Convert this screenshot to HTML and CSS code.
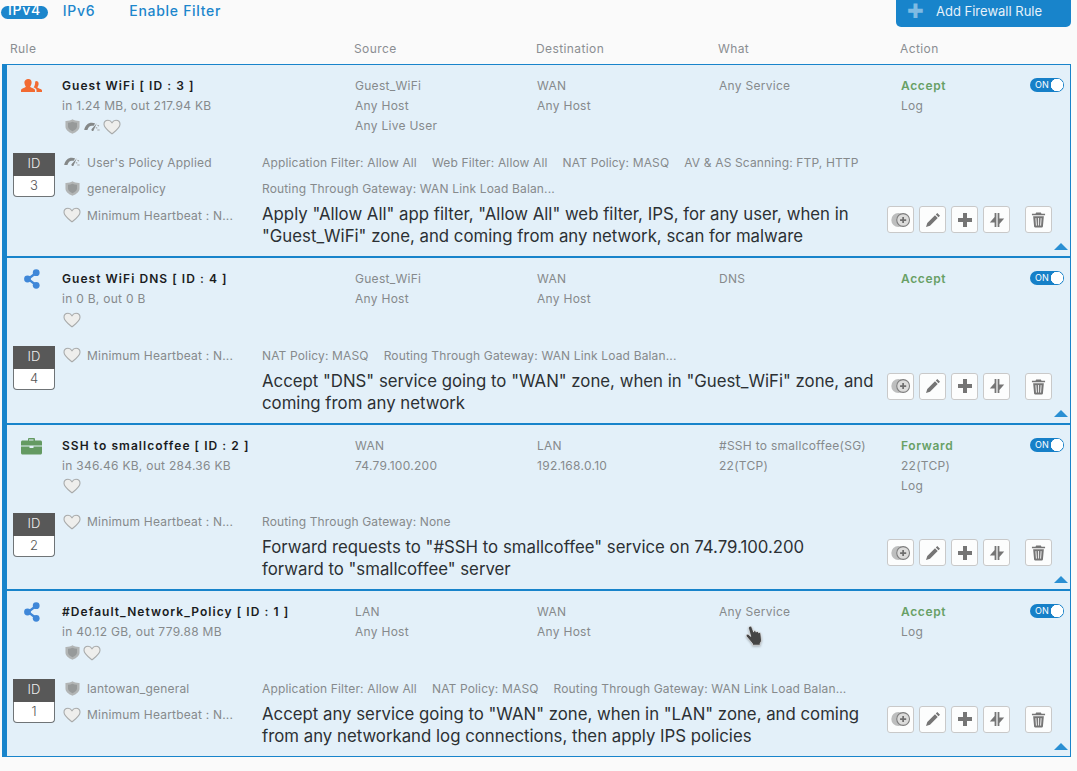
FILE: index.html
```html
<!DOCTYPE html>
<html lang="en">
<head>
<meta charset="utf-8">
<title>Firewall Rules</title>
<link rel="stylesheet" href="styles.css">
</head>
<body>
<svg class="defs" width="0" height="0" aria-hidden="true">
  <symbol id="shield" viewBox="0 0 16 16"><path d="M8 .3C10 1.600 12.500 2.100 15.500 2V8c0 3.500-3.200 6-7.500 7.700C3.700 14 .5 11.500.5 8V2C3.500 2.100 6 1.600 8 .3Z" fill="#b2b5b5"/><path d="M8 3c1.300.7 3 1.100 4.800 1.100v4c0 2.200-2.200 3.900-4.800 5-2.600-1.100-4.800-2.800-4.800-5v-4C5 4.100 6.700 3.700 8 3Z" fill="#979a9a"/></symbol>
  <symbol id="gauge" viewBox="0 0 16 10"><path d="M.2 8C1 3.500 4 .8 7.800.8c1.300 0 2.400.3 3.400.8L9.400 3.900C9 3.800 8.500 3.800 8 3.800 5.800 3.800 4.200 5.300 3.400 8Z" fill="#858888"/><path d="M12.800 1.200 7.500 7.300a1.300 1.300 0 0 0 1.800 1.600Z" fill="#858888"/><path d="M11.800 5.500l1.500.7M13.500 3.300l1.500.8M13.300 8h2.400" stroke="#a5a8a8" stroke-width="1.100"/></symbol>
  <symbol id="heart" viewBox="0 0 18 16"><path d="M9 14.800C5 11.700 1 9 1 5.300 1 2.900 2.800 1.200 5 1.200c1.700 0 3.100 1 4 2.500.9-1.500 2.300-2.500 4-2.500 2.200 0 4 1.700 4 4.100 0 3.700-4 6.400-8 9.500Z" fill="#eeeeec" stroke="#a8aaaa" stroke-width="1.100"/></symbol>
  <symbol id="people" viewBox="0 0 21 15"><path d="M7.500 1C9.500 1 10.800 2.600 10.600 4.700 10.500 6.300 9.900 7.500 9.300 8.300c-.3.800.3 1 1.500 1.500 1.400.6 3 1.100 3.200 2.400V14H0v-1.800c.2-1.300 1.800-1.800 3.200-2.400 1.200-.5 1.800-.7 1.500-1.500C4.100 7.500 3.500 6.300 3.400 4.700 3.200 2.600 5.500 1 7.500 1Z" fill="#f26a32"/><path d="M15 3c1.700 0 2.800 1.300 2.600 3.100-.1 1.300-.6 2.300-1.100 2.900-.2.700.2.900 1.200 1.300 1.200.5 2.800 1 3.300 2V14h-5.500v-2.300c-.3-1.300-1.800-2-2.900-2.500l.5-.5c.4-.8.900-1.900 1-3.200C14.100 4 14.300 3 15 3Z" fill="#f26a32"/></symbol>
  <symbol id="share" viewBox="0 0 16 20"><path d="M12 4 4 10l8 6" fill="none" stroke="#3f87d8" stroke-width="2.200"/><circle cx="12.200" cy="3.700" r="3.400" fill="#3f87d8"/><circle cx="3.500" cy="10" r="3.400" fill="#3f87d8"/><circle cx="12.200" cy="16.300" r="3.400" fill="#3f87d8"/></symbol>
  <symbol id="case" viewBox="0 0 21 18"><path d="M7 4V2.200C7 1.500 7.500 1 8.200 1h4.600c.7 0 1.200.5 1.200 1.200V4h-1.500V2.500h-4.500V4Z" fill="#649a62"/><path d="M1.500 3.500h18c.8 0 1.500.7 1.500 1.500v3.500H0V5c0-.8.700-1.500 1.500-1.500Z" fill="#649a62"/><path d="M0 9.500h8.500v1.500h4V9.500H21v6.500c0 .8-.7 1.500-1.500 1.500h-18C.7 17.500 0 16.800 0 16Z" fill="#649a62"/></symbol>
  <symbol id="b-add" viewBox="0 0 24 18"><circle cx="9.500" cy="9" r="8" fill="#bdbebe"/><circle cx="15" cy="9" r="7.300" fill="#dcdcdb" stroke="#7d7d7d" stroke-width="1.200"/><path d="M15 5.500v7M11.500 9h7" stroke="#6f6f6f" stroke-width="2"/></symbol>
  <symbol id="b-pen" viewBox="0 0 16 16"><path d="M12.300 1 15 3.700 13.500 5.200 10.800 2.500ZM10 3.300 12.700 6 5 13.700 1 15 2.300 11Z" fill="#757575"/></symbol>
  <symbol id="b-plus" viewBox="0 0 16 16"><path d="M6 1h4v5h5v4h-5v5H6v-5H1V6h5Z" fill="#757575"/></symbol>
  <symbol id="b-merge" viewBox="0 0 16 16"><path d="M7.400 1v14H5.600v-4.500H.8L5.600 5V1ZM8.600 15V1h1.800v5.500h4.800L10.400 12v3Z" fill="#757575"/></symbol>
  <symbol id="b-trash" viewBox="0 0 16 18"><path d="M5.500 1.500h5l.7 1.300H15v1.700H1V2.800h3.800Z" fill="#757575"/><path d="M2.300 5.500h11.400l-1 11c0 .5-.5 1-1 1H4.300c-.5 0-1-.5-1-1Z" fill="#757575"/><path d="M5.200 7.500l.6 8M8 7.500v8M10.800 7.500l-.6 8" stroke="#e8e8e8" stroke-width="1.100"/></symbol>
</svg>

<header class="topbar">
  <nav class="tabs">
    <a class="tab tab-active">IPv4</a>
    <a class="tab">IPv6</a>
    <a class="tab">Enable Filter</a>
  </nav>
  <button class="add-btn"><span class="add-plus">✚</span><span>Add Firewall Rule</span></button>
</header>

<div class="cols">
  <div>Rule</div><div>Source</div><div>Destination</div><div>What</div><div>Action</div>
</div>

<section class="rule">
  <div class="top">
    <div class="type"><svg class="ic-people"><use href="#people"/></svg></div>
    <div><div class="name">Guest WiFi [ ID : 3 ]</div><div class="line">in 1.24 MB, out 217.94 KB</div>
      <div class="badges"><svg class="i-shield"><use href="#shield"/></svg><svg class="i-gauge"><use href="#gauge"/></svg><svg class="i-heart"><use href="#heart"/></svg></div></div>
    <div><div class="line">Guest_WiFi</div><div class="line">Any Host</div><div class="line">Any Live User</div></div>
    <div><div class="line">WAN</div><div class="line">Any Host</div></div>
    <div><div class="line">Any Service</div></div>
    <div class="action"><div><div class="line verb">Accept</div><div class="line">Log</div></div><div class="toggle">ON</div></div>
  </div>
  <div class="bottom">
    <div class="idbox"><div class="idh">ID</div><div class="idn">3</div></div>
    <div class="meta">
      <div class="mrow"><span class="mi"><svg class="i-gauge"><use href="#gauge"/></svg></span>User's Policy Applied</div>
      <div class="mrow"><span class="mi"><svg class="i-shield"><use href="#shield"/></svg></span>generalpolicy</div>
      <div class="mrow"><span class="mi"><svg class="i-heart"><use href="#heart"/></svg></span>Minimum Heartbeat : N...</div>
    </div>
    <div class="detail">
      <div class="drow"><span>Application Filter: Allow All</span><span>Web Filter: Allow All</span><span>NAT Policy: MASQ</span><span>AV &amp; AS Scanning: FTP, HTTP</span></div>
      <div class="drow"><span>Routing Through Gateway: WAN Link Load Balan...</span></div>
      <div class="sumrow"><p class="summary">Apply "Allow All" app filter, "Allow All" web filter, IPS, for any user, when in "Guest_WiFi" zone, and coming from any network, scan for malware</p>
        <div class="btns"><button class="btn"><svg class="b-add"><use href="#b-add"/></svg></button><button class="btn"><svg class="b"><use href="#b-pen"/></svg></button><button class="btn"><svg class="b"><use href="#b-plus"/></svg></button><button class="btn"><svg class="b"><use href="#b-merge"/></svg></button><button class="btn btn-del"><svg class="b-t"><use href="#b-trash"/></svg></button></div></div>
    </div>
  </div>
  <span class="caret"></span>
</section>

<section class="rule">
  <div class="top">
    <div class="type"><svg class="ic-share"><use href="#share"/></svg></div>
    <div><div class="name">Guest WiFi DNS [ ID : 4 ]</div><div class="line">in 0 B, out 0 B</div>
      <div class="badges"><svg class="i-heart"><use href="#heart"/></svg></div></div>
    <div><div class="line">Guest_WiFi</div><div class="line">Any Host</div></div>
    <div><div class="line">WAN</div><div class="line">Any Host</div></div>
    <div><div class="line">DNS</div></div>
    <div class="action"><div><div class="line verb">Accept</div></div><div class="toggle">ON</div></div>
  </div>
  <div class="bottom">
    <div class="idbox"><div class="idh">ID</div><div class="idn">4</div></div>
    <div class="meta">
      <div class="mrow"><span class="mi"><svg class="i-heart"><use href="#heart"/></svg></span>Minimum Heartbeat : N...</div>
    </div>
    <div class="detail">
      <div class="drow"><span>NAT Policy: MASQ</span><span>Routing Through Gateway: WAN Link Load Balan...</span></div>
      <div class="sumrow"><p class="summary">Accept "DNS" service going to "WAN" zone, when in "Guest_WiFi" zone, and coming from any network</p>
        <div class="btns"><button class="btn"><svg class="b-add"><use href="#b-add"/></svg></button><button class="btn"><svg class="b"><use href="#b-pen"/></svg></button><button class="btn"><svg class="b"><use href="#b-plus"/></svg></button><button class="btn"><svg class="b"><use href="#b-merge"/></svg></button><button class="btn btn-del"><svg class="b-t"><use href="#b-trash"/></svg></button></div></div>
    </div>
  </div>
  <span class="caret"></span>
</section>

<section class="rule">
  <div class="top">
    <div class="type"><svg class="ic-case"><use href="#case"/></svg></div>
    <div><div class="name">SSH to smallcoffee [ ID : 2 ]</div><div class="line">in 346.46 KB, out 284.36 KB</div>
      <div class="badges"><svg class="i-heart"><use href="#heart"/></svg></div></div>
    <div><div class="line">WAN</div><div class="line">74.79.100.200</div></div>
    <div><div class="line">LAN</div><div class="line">192.168.0.10</div></div>
    <div><div class="line">#SSH to smallcoffee(SG)</div><div class="line">22(TCP)</div></div>
    <div class="action"><div><div class="line verb">Forward</div><div class="line">22(TCP)</div><div class="line">Log</div></div><div class="toggle">ON</div></div>
  </div>
  <div class="bottom">
    <div class="idbox"><div class="idh">ID</div><div class="idn">2</div></div>
    <div class="meta">
      <div class="mrow"><span class="mi"><svg class="i-heart"><use href="#heart"/></svg></span>Minimum Heartbeat : N...</div>
    </div>
    <div class="detail">
      <div class="drow"><span>Routing Through Gateway: None</span></div>
      <div class="sumrow"><p class="summary">Forward requests to "#SSH to smallcoffee" service on 74.79.100.200<br>forward to "smallcoffee" server</p>
        <div class="btns"><button class="btn"><svg class="b-add"><use href="#b-add"/></svg></button><button class="btn"><svg class="b"><use href="#b-pen"/></svg></button><button class="btn"><svg class="b"><use href="#b-plus"/></svg></button><button class="btn"><svg class="b"><use href="#b-merge"/></svg></button><button class="btn btn-del"><svg class="b-t"><use href="#b-trash"/></svg></button></div></div>
    </div>
  </div>
  <span class="caret"></span>
</section>

<section class="rule">
  <div class="top">
    <div class="type"><svg class="ic-share"><use href="#share"/></svg></div>
    <div><div class="name">#Default_Network_Policy [ ID : 1 ]</div><div class="line">in 40.12 GB, out 779.88 MB</div>
      <div class="badges"><svg class="i-shield"><use href="#shield"/></svg><svg class="i-heart"><use href="#heart"/></svg></div></div>
    <div><div class="line">LAN</div><div class="line">Any Host</div></div>
    <div><div class="line">WAN</div><div class="line">Any Host</div></div>
    <div><div class="line">Any Service</div></div>
    <div class="action"><div><div class="line verb">Accept</div><div class="line">Log</div></div><div class="toggle">ON</div></div>
  </div>
  <div class="bottom">
    <div class="idbox"><div class="idh">ID</div><div class="idn">1</div></div>
    <div class="meta">
      <div class="mrow"><span class="mi"><svg class="i-shield"><use href="#shield"/></svg></span>lantowan_general</div>
      <div class="mrow"><span class="mi"><svg class="i-heart"><use href="#heart"/></svg></span>Minimum Heartbeat : N...</div>
    </div>
    <div class="detail">
      <div class="drow"><span>Application Filter: Allow All</span><span>NAT Policy: MASQ</span><span>Routing Through Gateway: WAN Link Load Balan...</span></div>
      <div class="sumrow"><p class="summary">Accept any service going to "WAN" zone, when in "LAN" zone, and coming from any networkand log connections, then apply IPS policies</p>
        <div class="btns"><button class="btn"><svg class="b-add"><use href="#b-add"/></svg></button><button class="btn"><svg class="b"><use href="#b-pen"/></svg></button><button class="btn"><svg class="b"><use href="#b-plus"/></svg></button><button class="btn"><svg class="b"><use href="#b-merge"/></svg></button><button class="btn btn-del"><svg class="b-t"><use href="#b-trash"/></svg></button></div></div>
    </div>
  </div>
  <span class="caret"></span>
</section>

<svg class="cursor" viewBox="0 0 20 22" aria-hidden="true"><path d="M4.500 1.500c.8-.7 1.800-.3 2.200.6l2 5 .2-1.300c.6-.5 1.500-.3 1.800.4l.4 1 .4-.6c.6-.4 1.500-.2 1.800.5l.3.8.5-.3c.7-.2 1.400.2 1.600 1l.8 6.400c0 1.300-.5 2.400-1.300 3.200v2H7.500v-1.500L1.500 11.500c-.5-.7-.4-1.600.3-2 .6-.4 1.400-.3 2 .2l2 1.800-2.200-8c-.2-.7.200-1.600.9-2Z" fill="#454545" stroke="#fff" stroke-width=".6"/></svg>
</body>
</html>
```
FILE: styles.css
```css
* { box-sizing: border-box; }
html, body { margin: 0; padding: 0; }
body {
  width: 1077px;
  height: 771px;
  overflow: hidden;
  position: relative;
  background: #fafafa;
  font-family: Inter, "Noto Sans", sans-serif;
  font-size: 12px;
  color: #868a8c;
}
.defs { position: absolute; }
svg { display: block; }

.topbar { display: flex; justify-content: space-between; height: 27px; padding: 0 6px 0 1px; }
.tabs { display: flex; align-items: flex-start; }
.tab {
  height: 20px;
  line-height: 21px;
  font-size: 14px;
  font-weight: 500;
  letter-spacing: .7px;
  color: #1c86cc;
  margin-right: 34px;
}
.tab-active {
  margin-top: 6px;
  height: 13px;
  line-height: 8px;
  margin-right: 15px;
  padding: 0 7px;
  background: #1c86cc;
  color: #fff;
  border-radius: 7px;
}
.add-btn {
  width: 175px;
  height: 28px;
  margin-top: -1px;
  border: 0;
  border-radius: 0 0 5px 5px;
  background: #1884cb;
  font: 400 13px Inter, sans-serif;
  display: flex;
  align-items: center;
  padding: 0 0 4px 11px;
  color: #e6f2fa;
}
.add-plus { color: #7fbbe3; font-size: 20px; width: 29px; text-align: left; line-height: 20px; }

.cols {
  display: grid;
  grid-template-columns: 344px 182px 182px 182px 1fr;
  height: 37px;
  padding: 14px 0 0 10px;
  line-height: 16px;
  letter-spacing: .4px;
  color: #8a8e92;
}

.rule {
  position: relative;
  width: 1069px;
  margin-left: 2px;
  padding-bottom: 9px;
  background: #e3f0f9;
  border: 1px solid #1884cb;
  border-left-width: 5px;
}
.top {
  display: grid;
  grid-template-columns: 55px 293px 182px 182px 182px 1fr;
  height: 84px;
  padding-top: 11px;
}
.type { display: flex; justify-content: flex-start; padding: 2px 0 0 14px; }
.ic-people { width: 21px; height: 15px; }
.ic-share { width: 16px; height: 20px; margin: -2px 0 0 3px; }
.ic-case { width: 21px; height: 18px; margin: -1px 0 0 0; }
.name {
  height: 20px;
  line-height: 20px;
  font-weight: 600;
  letter-spacing: 1.050px;
  color: #1a1c1e;
}
.line { height: 20px; line-height: 20px; letter-spacing: .28px; white-space: nowrap; }
.verb { color: #68a066; font-weight: 600; letter-spacing: .65px; }
.badges { display: flex; align-items: center; gap: 3px; height: 21px; margin-left: 1px; }
.badges .i-shield { margin-left: 2px; }
.badges .i-gauge { margin-left: 1px; }
.i-shield { width: 15px; height: 15px; flex: none; }
.i-gauge { width: 16px; height: 10px; flex: none; }
.i-heart { width: 18px; height: 16px; flex: none; }

.action { display: flex; justify-content: space-between; padding-right: 6px; }
.toggle {
  width: 34px;
  height: 14px;
  margin-top: 2px;
  border-radius: 7px;
  background: #1680c8 radial-gradient(circle at 27px 7px, #fff 6px, #1680c8 6.500px);
  color: #fff;
  font-size: 9px;
  line-height: 14px;
  padding-left: 5px;
}

.bottom { display: grid; grid-template-columns: 42px 199px 1fr; padding-left: 6px; }
.idbox { margin-top: 4px; height: 44px; width: 42px; }
.idh { height: 23px; line-height: 21px; font-size: 13px; font-weight: 300; background: #585858; color: #eee; text-align: center; }
.idn {
  height: 21px;
  line-height: 19px;
  background: #fff;
  color: #555;
  text-align: center;
  font-size: 13px;
  font-weight: 300;
  border: 1px solid #6f7477;
  border-top: 0;
  border-radius: 0 0 4px 4px;
}
.meta { margin-left: 8px; }
.mrow { display: flex; align-items: center; height: 26.500px; letter-spacing: .2px; white-space: nowrap; }
.mi { width: 24px; display: flex; justify-content: center; padding-right: 6px; flex: none; }
.mi .i-shield { margin-left: 1px; }
.detail { margin-left: 8px; }
.drow { display: flex; gap: 15px; height: 26.500px; align-items: center; letter-spacing: .15px; white-space: nowrap; }
.sumrow { display: flex; align-items: flex-start; margin-top: 1px; }
.summary {
  width: 625px;
  flex: none;
  margin: 0;
  font-family: Inter, sans-serif;
  font-size: 16.800px;
  line-height: 22px;
  color: #2c3034;
}
.btns { display: flex; gap: 5px; margin-top: 3px; }
.btn {
  width: 27px;
  height: 27px;
  padding: 0;
  background: #fcfdfd;
  border: 1px solid #c9c9c9;
  border-radius: 3px;
  display: flex;
  align-items: center;
  justify-content: center;
}
.btn-del { margin-left: 10px; }
.b-add { width: 21px; height: 16px; }
.b { width: 16px; height: 16px; }
.b-t { width: 15px; height: 17px; }
.caret {
  position: absolute;
  right: 2px;
  bottom: 6px;
  width: 0;
  height: 0;
  border-left: 7px solid transparent;
  border-right: 7px solid transparent;
  border-bottom: 7px solid #2a8fd3;
}
.cursor { position: absolute; left: 745px; top: 625px; width: 20px; height: 22px; filter: drop-shadow(0 1px 1px rgba(0,0,0,.3)); }
```
